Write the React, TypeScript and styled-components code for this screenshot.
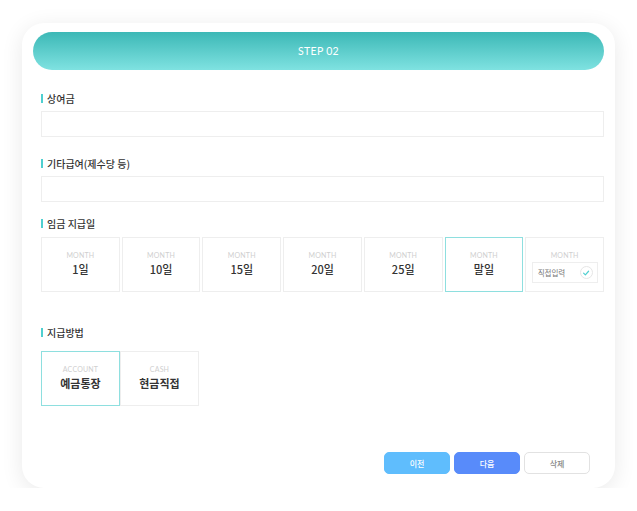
import styled, { createGlobalStyle } from "styled-components";

const GlobalStyle = createGlobalStyle`
  body {
    margin: 0;
    background: #ffffff;
    font-family: "Noto Sans CJK KR", "Noto Sans", sans-serif;
  }
`;

const days = ["1일", "10일", "15일", "20일", "25일", "말일"];
const selectedDay = "말일";

const methods = [
  { en: "ACCOUNT", ko: "예금통장" },
  { en: "CASH", ko: "현금직접" },
];
const selectedMethod = "예금통장";

const App = () => {
  return (
    <Page>
      <GlobalStyle />
      <Card>
        <StepBar>STEP 02</StepBar>
        <Content>
          <Label $top={22}>상여금</Label>
          <TextInput />

          <Label $top={20}>기타급여(제수당 등)</Label>
          <TextInput />

          <Label $top={15}>임금 지급일</Label>
          <DayGrid>
            {days.map((day) => (
              <OptionBox key={day} $active={day === selectedDay}>
                <SubLabel>MONTH</SubLabel>
                <DayValue>{day}</DayValue>
              </OptionBox>
            ))}
            <OptionBox $active={false}>
              <SubLabel>MONTH</SubLabel>
              <DirectInput>
                <span>직접입력</span>
                <CheckCircle>
                  <svg width="8" height="8" viewBox="0 0 10 10">
                    <path
                      d="M2 5.2 L4.2 7.3 L8.2 2.8"
                      fill="none"
                      stroke="#4fcfd0"
                      strokeWidth="1.5"
                      strokeLinecap="round"
                      strokeLinejoin="round"
                    />
                  </svg>
                </CheckCircle>
              </DirectInput>
            </OptionBox>
          </DayGrid>

          <Label $top={34}>지급방법</Label>
          <MethodRow>
            {methods.map(({ en, ko }) => (
              <OptionBox key={ko} $active={ko === selectedMethod}>
                <SubLabel>{en}</SubLabel>
                <MethodValue>{ko}</MethodValue>
              </OptionBox>
            ))}
          </MethodRow>

          <Buttons>
            <Button $variant="prev">이전</Button>
            <Button $variant="next">다음</Button>
            <Button $variant="delete">삭제</Button>
          </Buttons>
        </Content>
      </Card>
    </Page>
  );
};

export default App;

const Page = styled.div`
  padding: 23px 0 0 22px;
`;

const Card = styled.div`
  width: 593px;
  box-sizing: border-box;
  padding: 9px 11px 14px;
  background: #ffffff;
  border-radius: 22px;
  box-shadow: 0 4px 22px rgba(0, 0, 0, 0.09);
`;

const StepBar = styled.div`
  height: 38px;
  border-radius: 19px;
  background: linear-gradient(180deg, #3cb8b6 0%, #7fe2e1 100%);
  display: flex;
  align-items: center;
  justify-content: center;
  color: #ffffff;
  font-family: "Lato", "Inter", sans-serif;
  font-size: 10.5px;
  letter-spacing: 0.3px;
`;

const Content = styled.div`
  padding-left: 8px;
  display: flex;
  flex-direction: column;
`;

const Label = styled.div<{ $top: number }>`
  margin-top: ${(p) => p.$top}px;
  display: flex;
  align-items: center;
  gap: 4px;
  height: 12px;
  font-size: 10px;
  font-weight: 500;
  color: #333333;

  &::before {
    content: "";
    width: 2px;
    height: 9px;
    background: #4fcfd0;
  }
`;

const TextInput = styled.div`
  margin-top: 7px;
  height: 26px;
  box-sizing: border-box;
  border: 1px solid #eeeeee;
  background: #ffffff;
`;

const DayGrid = styled.div`
  margin-top: 8px;
  display: grid;
  grid-template-columns: repeat(7, 1fr);
  gap: 2px;
`;

const MethodRow = styled.div`
  margin-top: 13px;
  display: grid;
  grid-template-columns: repeat(2, 79px);
`;

const OptionBox = styled.div<{ $active: boolean }>`
  height: 55px;
  box-sizing: border-box;
  border: 1px solid ${(p) => (p.$active ? "#8edfdf" : "#eeeeee")};
  display: flex;
  flex-direction: column;
  align-items: center;
  padding-top: 12px;
`;

const SubLabel = styled.div`
  font-family: "Lato", "Inter", sans-serif;
  font-size: 7px;
  line-height: 10px;
  color: #cfcfcf;
  letter-spacing: 0.2px;
`;

const DayValue = styled.div`
  margin-top: 2px;
  font-size: 11px;
  line-height: 15px;
  font-weight: 500;
  color: #333333;
`;

const MethodValue = styled.div`
  margin-top: 2px;
  font-size: 11px;
  line-height: 15px;
  font-weight: 700;
  color: #333333;
`;

const DirectInput = styled.div`
  margin-top: 2px;
  width: 66px;
  height: 21px;
  box-sizing: border-box;
  border: 1px solid #eeeeee;
  display: flex;
  align-items: center;
  justify-content: space-between;
  padding: 0 4px 0 5px;
  font-size: 7.5px;
  color: #777777;
`;

const CheckCircle = styled.div`
  width: 13px;
  height: 13px;
  box-sizing: border-box;
  border: 1px solid #e6e6e6;
  border-radius: 50%;
  display: flex;
  align-items: center;
  justify-content: center;
`;

const Buttons = styled.div`
  margin-top: 46px;
  margin-right: 14px;
  display: flex;
  justify-content: flex-end;
  gap: 4px;
`;

const buttonColors = {
  prev: { bg: "#5fbdfd", fg: "#ffffff", border: "#5fbdfd" },
  next: { bg: "#588bfa", fg: "#ffffff", border: "#588bfa" },
  delete: { bg: "#ffffff", fg: "#888888", border: "#e2e2e2" },
};

const Button = styled.div<{ $variant: keyof typeof buttonColors }>`
  width: 66px;
  height: 22px;
  box-sizing: border-box;
  border-radius: 5px;
  border: 1px solid ${(p) => buttonColors[p.$variant].border};
  background: ${(p) => buttonColors[p.$variant].bg};
  color: ${(p) => buttonColors[p.$variant].fg};
  display: flex;
  align-items: center;
  justify-content: center;
  font-size: 8px;
  font-weight: 500;
`;
